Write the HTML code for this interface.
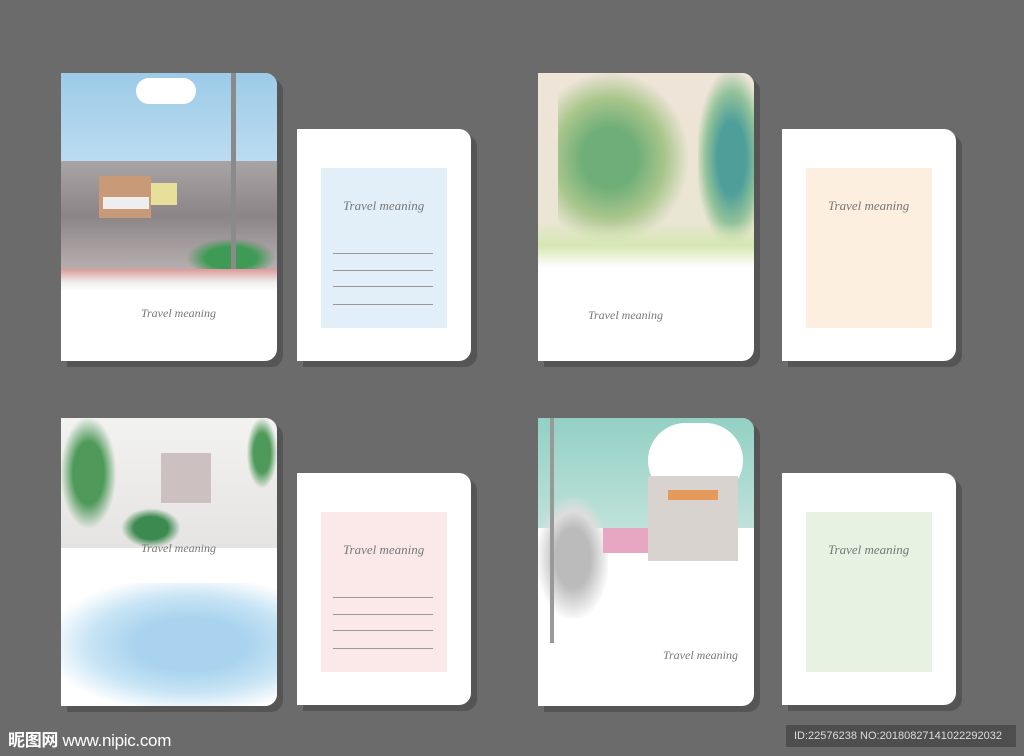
<!DOCTYPE html>
<html><head><meta charset="utf-8"><style>
*{margin:0;padding:0;box-sizing:border-box}
body{width:1024px;height:756px;background:#6b6b6b;position:relative;overflow:hidden;font-family:"Liberation Sans",sans-serif}
.c{position:absolute;background:#fff;border-radius:0 12px 12px 0;box-shadow:6px 6px 0 #555;overflow:hidden}
.cv{width:216px;height:288px}
.bk{width:174px;height:232px}
.in{position:absolute;left:24px;top:39px;width:126px;height:160px}
.t{position:absolute;font-family:"Liberation Serif",serif;font-style:italic;color:#777;font-size:13px;white-space:nowrap}
.ln{position:absolute;height:1px;background:#999;left:12px;width:100px}
.s{position:absolute;font-family:"Liberation Serif",serif;font-style:italic;color:#888;font-size:6px;white-space:nowrap}
.a{position:absolute}
</style></head><body>

<!-- TL cover -->
<div class="c cv" style="left:61px;top:73px">
 <div class="a" style="left:0;top:0;width:216px;height:110px;background:linear-gradient(180deg,#9ccbe8,#c3e0f2)"></div>
 <div class="a" style="left:75px;top:5px;width:60px;height:26px;background:#fff;border-radius:14px"></div>
 <div class="a" style="left:0;top:88px;width:216px;height:110px;background:linear-gradient(180deg,#a9a4a6,#8c8588 50%,#b8b0b0)"></div>
 <div class="a" style="left:38px;top:103px;width:52px;height:42px;background:#c89a78"></div>
 <div class="a" style="left:42px;top:124px;width:46px;height:12px;background:#eee"></div>
 <div class="a" style="left:90px;top:110px;width:26px;height:22px;background:#e8e09a"></div>
 <div class="a" style="left:125px;top:165px;width:90px;height:40px;background:radial-gradient(ellipse,#3f9a55 40%,transparent 70%)"></div>
 <div class="a" style="left:170px;top:0;width:5px;height:200px;background:#8a8a8a"></div>
 <div class="a" style="left:0;top:196px;width:216px;height:22px;background:linear-gradient(180deg,#d99 0,#eee 60%,#fff)"></div>
 <div class="t" style="left:80px;top:233px;font-size:12px">Travel meaning</div>
</div>
<div class="c bk" style="left:297px;top:129px"><div class="in" style="background:#e2eff9"></div>
 <div class="t" style="left:46px;top:69px">Travel meaning</div>
 <div class="ln" style="left:36px;top:124px"></div><div class="ln" style="left:36px;top:141px"></div><div class="ln" style="left:36px;top:157px"></div><div class="ln" style="left:36px;top:175px"></div>
</div>

<!-- TR cover -->
<div class="c cv" style="left:538px;top:73px">
 <div class="a" style="left:0;top:0;width:216px;height:190px;background:linear-gradient(180deg,#efe4d8,#e8e6d2)"></div>
 <div class="a" style="left:20px;top:0;width:130px;height:170px;background:radial-gradient(ellipse at 40% 50%,#6fae78 25%,#a9c68c 50%,transparent 72%)"></div>
 <div class="a" style="left:160px;top:0;width:56px;height:170px;background:radial-gradient(ellipse at 60% 50%,#4e9e9a 30%,#93c39a 55%,transparent 75%)"></div>
 <div class="a" style="left:0;top:150px;width:216px;height:45px;background:linear-gradient(180deg,transparent,#d5e7b2 50%,#fff)"></div>
 <div class="t" style="left:50px;top:235px;font-size:12px">Travel meaning</div>
</div>
<div class="c bk" style="left:782px;top:129px"><div class="in" style="background:#fcefe0"></div>
 <div class="t" style="left:46px;top:69px">Travel meaning</div>
</div>

<!-- BL cover -->
<div class="c cv" style="left:61px;top:418px">
 <div class="a" style="left:0;top:0;width:216px;height:130px;background:linear-gradient(180deg,#f2f2f0,#e6e4e2)"></div>
 <div class="a" style="left:0;top:0;width:55px;height:110px;background:radial-gradient(ellipse,#4f9a5a 40%,transparent 72%)"></div>
 <div class="a" style="left:186px;top:0;width:30px;height:70px;background:radial-gradient(ellipse,#4f9a5a 40%,transparent 72%)"></div>
 <div class="a" style="left:100px;top:35px;width:50px;height:50px;background:#ccc0c0"></div>
 <div class="a" style="left:60px;top:90px;width:60px;height:40px;background:radial-gradient(ellipse,#3d8a50 40%,transparent 70%)"></div>
 <div class="a" style="left:0;top:165px;width:216px;height:123px;background:radial-gradient(ellipse at 60% 50%,#a9d3ee 30%,#c7e4f5 55%,#fff 80%)"></div>
 <div class="t" style="left:80px;top:123px;font-size:12px">Travel meaning</div>
</div>
<div class="c bk" style="left:297px;top:473px"><div class="in" style="background:#fbe9ea"></div>
 <div class="t" style="left:46px;top:69px">Travel meaning</div>
 <div class="ln" style="left:36px;top:124px"></div><div class="ln" style="left:36px;top:141px"></div><div class="ln" style="left:36px;top:157px"></div><div class="ln" style="left:36px;top:175px"></div>
</div>

<!-- BR cover -->
<div class="c cv" style="left:538px;top:418px">
 <div class="a" style="left:0;top:0;width:216px;height:110px;background:linear-gradient(180deg,#93d0c4,#bfe2da)"></div>
 <div class="a" style="left:110px;top:5px;width:95px;height:75px;background:#fff;border-radius:40px"></div>
 <div class="a" style="left:110px;top:58px;width:90px;height:85px;background:#d9d3cf"></div>
 <div class="a" style="left:130px;top:72px;width:50px;height:10px;background:#e59a5a"></div>
 <div class="a" style="left:0;top:80px;width:70px;height:120px;background:radial-gradient(ellipse,#bbb 35%,#ddd 55%,transparent 75%)"></div>
 <div class="a" style="left:65px;top:110px;width:45px;height:25px;background:#e7a6c2"></div>
 <div class="a" style="left:12px;top:0;width:4px;height:225px;background:#999"></div>
 <div class="t" style="left:125px;top:230px;font-size:12px">Travel meaning</div>
</div>
<div class="c bk" style="left:782px;top:473px"><div class="in" style="background:#e7f2e2"></div>
 <div class="t" style="left:46px;top:69px">Travel meaning</div>
</div>

<div class="a" style="left:8px;top:726px;color:#fff;font-size:17px;font-family:'Liberation Sans','Noto Sans CJK SC',sans-serif;font-weight:bold;letter-spacing:-0.3px">昵图网 <span style="font-weight:normal">www.nipic.com</span></div>
<div class="a" style="left:786px;top:725px;width:230px;height:22px;background:#4e4e4e;color:#ddd;font-size:11px;line-height:22px;padding-left:8px">ID:22576238 NO:20180827141022292032</div>
</body></html>
